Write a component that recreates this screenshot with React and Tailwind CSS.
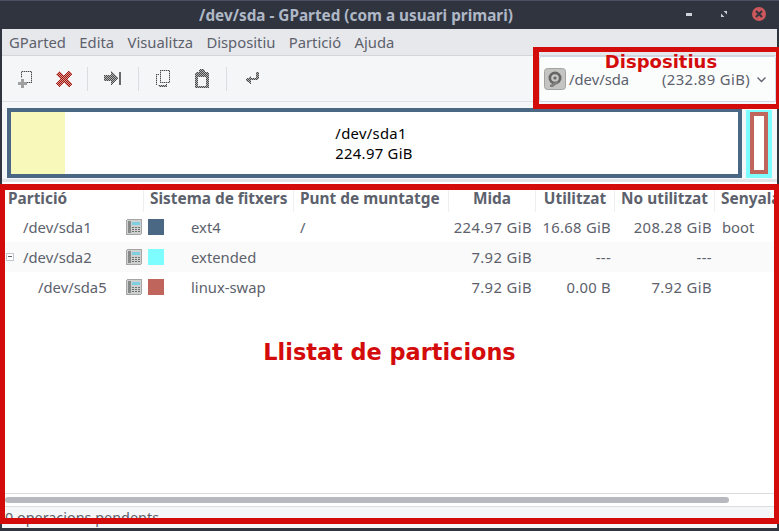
import React from 'react';

const columns = 'grid grid-cols-[142px_150px_155px_87px_79px_100px_62px]';

const partitions = [
  { name: '/dev/sda1', indent: 'pl-[21px]', color: 'bg-[#4a6784]', fs: 'ext4', mount: '/', size: '224.97 GiB', used: '16.68 GiB', free: '208.28 GiB', flags: 'boot' },
  { name: '/dev/sda2', indent: 'pl-[21px]', color: 'bg-[#7dfdff]', fs: 'extended', mount: '', size: '7.92 GiB', used: '---', free: '---', flags: '', expander: true, striped: true },
  { name: '/dev/sda5', indent: 'pl-[36px]', color: 'bg-[#c0655b]', fs: 'linux-swap', mount: '', size: '7.92 GiB', used: '0.00 B', free: '7.92 GiB', flags: '' },
];

// toolbar icons are disabled in the shot, so they are drawn with a dither
const Dither = ({ id, color = '#4a4a4a', light = '#b4b4b4' }) => (
  <defs>
    <pattern id={id} width="2" height="2" patternUnits="userSpaceOnUse">
      <rect width="2" height="2" fill={light} />
      <rect width="1" height="1" fill={color} />
      <rect x="1" y="1" width="1" height="1" fill={color} />
    </pattern>
  </defs>
);

const NewIcon = () => (
  <svg width="16" height="18" viewBox="0 0 16 18" shapeRendering="crispEdges">
    <Dither id="d-new" />
    <path d="M4 1h11v12h-5v-1h4V2H5v6H4z" fill="url(#d-new)" />
    <path d="M4 9h3v3h3v3H7v3H4v-3H1v-3h3z" fill="#a0a0a0" />
  </svg>
);

const DeleteIcon = () => (
  <svg width="16" height="16" viewBox="0 0 16 16" shapeRendering="crispEdges">
    <Dither id="d-del" color="#a3140e" light="#d99a90" />
    <path d="M3 0l5 4 5-4 3 3-4 5 4 5-3 3-5-4-5 4-3-3 4-5-4-5z" fill="url(#d-del)" />
  </svg>
);

const ApplyIcon = () => (
  <svg width="17" height="15" viewBox="0 0 17 15" shapeRendering="crispEdges">
    <Dither id="d-apply" />
    <path d="M0 4h7V0l7 7-7 7v-4H0z" fill="url(#d-apply)" />
    <rect x="15" y="1" width="2" height="13" fill="#6a6a6a" />
  </svg>
);

const CopyIcon = () => (
  <svg width="16" height="19" viewBox="0 0 16 19" shapeRendering="crispEdges">
    <Dither id="d-copy" />
    <path d="M5 1h10v13H5z M6 2v11h8V2z" fillRule="evenodd" fill="url(#d-copy)" />
    <path d="M1 5h3v1H2v10h9v-1h1v3H4v-1H3v-1H1z" fill="url(#d-copy)" />
  </svg>
);

const PasteIcon = () => (
  <svg width="16" height="20" viewBox="0 0 16 20" shapeRendering="crispEdges">
    <Dither id="d-paste" />
    <path d="M6 0h4v1h1v2h3v1h1v15H1V4h1V3h3V1h1z M4 8v9h8V8z" fillRule="evenodd" fill="url(#d-paste)" />
  </svg>
);

const UndoIcon = () => (
  <svg width="16" height="15" viewBox="0 0 16 15" shapeRendering="crispEdges">
    <Dither id="d-undo" />
    <path d="M12 1h3v6l-2 2H7v4L1 9l6-4v2h5z" fill="url(#d-undo)" />
  </svg>
);

const DiskIcon = () => (
  <svg width="22" height="22" viewBox="0 0 22 22">
    <rect x="0.5" y="0.5" width="21" height="21" rx="3" fill="#c4c4c2" stroke="#a2a2a0" />
    <circle cx="11" cy="10" r="6.5" fill="#666666" />
    <circle cx="11" cy="10" r="3.8" fill="#c6c6c4" />
    <circle cx="11" cy="10" r="1.6" fill="#666666" />
    <path d="M6 17l7-4 2 1-6 5H6z" fill="#808080" />
  </svg>
);

const InfoIcon = () => (
  <svg width="16" height="16" viewBox="0 0 16 16" shapeRendering="crispEdges">
    <rect width="16" height="16" rx="2" fill="#a3a6a5" />
    <rect x="1" y="1" width="14" height="14" fill="#cfd1d0" />
    <rect x="2" y="2" width="3" height="12" fill="#858988" />
    <rect x="6" y="3" width="8" height="3" fill="#7fcfe0" />
    <path d="M6 8h2v1H6zm3 0h2v1H9zm3 0h2v1h-2zM6 10h2v1H6zm3 0h2v1H9zm3 0h2v1h-2zM6 12h2v1H6zm3 0h2v1H9zm3 0h2v1h-2z" fill="#6b6f6e" />
  </svg>
);

const Separator = ({ width }) => (
  <div className={`flex justify-center ${width}`}>
    <div className="w-px h-6 bg-[#dcdde1]" />
  </div>
);

const ToolButton = ({ width, children }) => (
  <div className={`flex items-center justify-center ${width}`}>{children}</div>
);

const HeaderCell = ({ children, align = 'pl-[6px]' }) => (
  <div className={`h-[27px] flex items-center border-r border-[#eeeff1] whitespace-nowrap overflow-hidden ${align}`}>
    {children}
  </div>
);

export default function App() {
  return (
    <div className="relative w-[779px] h-[531px] overflow-hidden bg-[#2f343f] text-[14.8px] text-[#5c616c] font-['Noto_Sans',sans-serif]">
      {/* title bar */}
      <div className="relative h-[29px] border-t border-[#4b5162] flex items-center justify-center pr-[67px]">
        <span className="font-bold text-[15.3px] text-[#afb8c6]">/dev/sda - GParted (com a usuari primari)</span>
        <div className="absolute right-[13px] top-[6px] flex items-center">
          <div className="w-[6px] h-[3px] bg-[#cfd2d8] mr-[29px]" />
          <svg className="mr-[25px]" width="6" height="6" viewBox="0 0 7 7"><path d="M3 0h4v4zM0 3l4 4H0z" fill="#cfd2d8" /></svg>
          <div className="w-[14px] h-[14px] rounded-full bg-[#cc575d] flex items-center justify-center">
            <svg width="8" height="8" viewBox="0 0 8 8"><path d="M1 1l6 6M7 1L1 7" stroke="#2f343f" strokeWidth="2" /></svg>
          </div>
        </div>
      </div>

      {/* window body */}
      <div className="mx-[2px] w-[775px] h-[499px] flex flex-col bg-white">
        <div className="h-[27px] bg-[#e7e8eb] border-b border-[#d4d5db] flex items-center gap-[13.4px] pl-[7px] pt-px shrink-0">
          <span>GParted</span>
          <span>Edita</span>
          <span>Visualitza</span>
          <span>Dispositiu</span>
          <span>Partició</span>
          <span>Ajuda</span>
        </div>

        <div className="h-[46px] bg-[#f5f6f7] border-b border-[#dfe0e4] flex items-center justify-between pl-[3px] pr-px shrink-0">
          <div className="flex items-center">
            <ToolButton width="w-[39px]"><NewIcon /></ToolButton>
            <ToolButton width="w-[39px]"><DeleteIcon /></ToolButton>
            <Separator width="w-[9px]" />
            <ToolButton width="w-[41px]"><ApplyIcon /></ToolButton>
            <Separator width="w-[10px]" />
            <ToolButton width="w-[39px]"><CopyIcon /></ToolButton>
            <ToolButton width="w-[39px]"><PasteIcon /></ToolButton>
            <Separator width="w-[10px]" />
            <ToolButton width="w-[42px]"><UndoIcon /></ToolButton>
          </div>
          <div className="w-[237px] h-[46px] bg-[#fbfcfc] border border-[#cfd6e6] rounded-[2px] flex items-center pl-[4px] pr-[9px]">
            <DiskIcon />
            <span className="ml-[3px] mt-[2px]">/dev/sda</span>
            <span className="ml-auto mt-[2px] tracking-[0.4px]">(232.89 GiB)</span>
            <svg className="ml-[7px] mt-[3px]" width="9" height="6" viewBox="0 0 9 6"><path d="M0.5 0.5l4 4 4-4" fill="none" stroke="#5c616c" strokeWidth="1.3" /></svg>
          </div>
        </div>

        {/* disk graph */}
        <div className="h-[80px] bg-[#f5f6f7] border-b-[3px] border-[#e3e4e7] flex pl-[5px] pt-[6px] shrink-0">
          <div className="w-[735px] h-[70px] border-4 border-[#4a6784] bg-white flex">
            <div className="w-[54px] bg-[#f8f8ba]" />
            <div className="flex-1 flex justify-center pr-[55px] pt-[11px] leading-[20px] text-black">
              <div className="flex flex-col items-start tracking-[0.3px]">
                <span>/dev/sda1</span>
                <span>224.97 GiB</span>
              </div>
            </div>
          </div>
          <div className="ml-[4px] mt-[2px] w-[26px] h-[68px] bg-[#7dfdff] p-[2px_4px_4px]">
            <div className="h-full border-4 border-[#c0655b] bg-white" />
          </div>
        </div>

        {/* partition list */}
        <div className={`${columns} font-bold text-[15.4px] shrink-0 pt-[3px] overflow-hidden`}>
          <HeaderCell>Partició</HeaderCell>
          <HeaderCell>Sistema de fitxers</HeaderCell>
          <HeaderCell>Punt de muntatge</HeaderCell>
          <HeaderCell align="justify-center">Mida</HeaderCell>
          <HeaderCell align="justify-center">Utilitzat</HeaderCell>
          <HeaderCell align="justify-center">No utilitzat</HeaderCell>
          <HeaderCell>Senyaladors</HeaderCell>
        </div>
        <div className="flex-1">
          {partitions.map((p) => (
            <div key={p.name} className={`${columns} h-[30px] items-center ${p.striped ? 'bg-[#fafafa]' : ''}`}>
              <div className={`relative flex items-center justify-between pr-[18px] ${p.indent}`}>
                {p.expander && (
                  <div className="absolute left-[4px] top-[7px] w-[8px] h-[8px] border border-[#c4c6d0] bg-white flex items-center justify-center">
                    <div className="w-[4px] h-px bg-[#5c616c]" />
                  </div>
                )}
                <span>{p.name}</span>
                <div className="-mr-[16px]"><InfoIcon /></div>
              </div>
              <div className="flex items-center pl-[4px]">
                <div className={`w-4 h-4 ${p.color}`} />
                <span className="ml-[27px]">{p.fs}</span>
              </div>
              <div className="pl-[6px]">{p.mount}</div>
              <div className="text-right pr-[4px] tracking-[0.4px]">{p.size}</div>
              <div className="text-right pr-[4px] tracking-[0.3px]">{p.used}</div>
              <div className="text-right pr-[3px] tracking-[0.4px]">{p.free}</div>
              <div className="pl-[7px]">{p.flags}</div>
            </div>
          ))}
        </div>

        <div className="h-[14px] border-y border-[#dcdcde] px-[3px] flex items-center shrink-0">
          <div className="w-[724px] h-[6px] rounded-full bg-[#b8b9be]" />
        </div>
        <div className="h-[21px] bg-[#f5f6f7] pl-[3px] flex items-center shrink-0 whitespace-nowrap text-[14.4px]">
          <span>0 operacions pendents</span>
        </div>
      </div>

      {/* red annotations drawn over the screenshot */}
      <div className="absolute left-[533px] top-[47px] w-[246px] h-[62px] border-[5px] border-r-[3px] border-l-[6px] border-[#d40b0b] flex justify-center">
        <span className="text-[#d40b0b] font-bold text-[18px] leading-none mt-px ml-[7px] font-['DejaVu_Sans',sans-serif]">Dispositius</span>
      </div>
      <div className="absolute left-0 top-[184px] w-[779px] h-[340px] border-[5px] border-t-[6px] border-b-[6px] border-[#d40b0b] flex justify-center pt-[151px]">
        <span className="text-[#d40b0b] font-bold text-[22.4px] leading-none font-['DejaVu_Sans',sans-serif]">Llistat de particions</span>
      </div>
    </div>
  );
}
